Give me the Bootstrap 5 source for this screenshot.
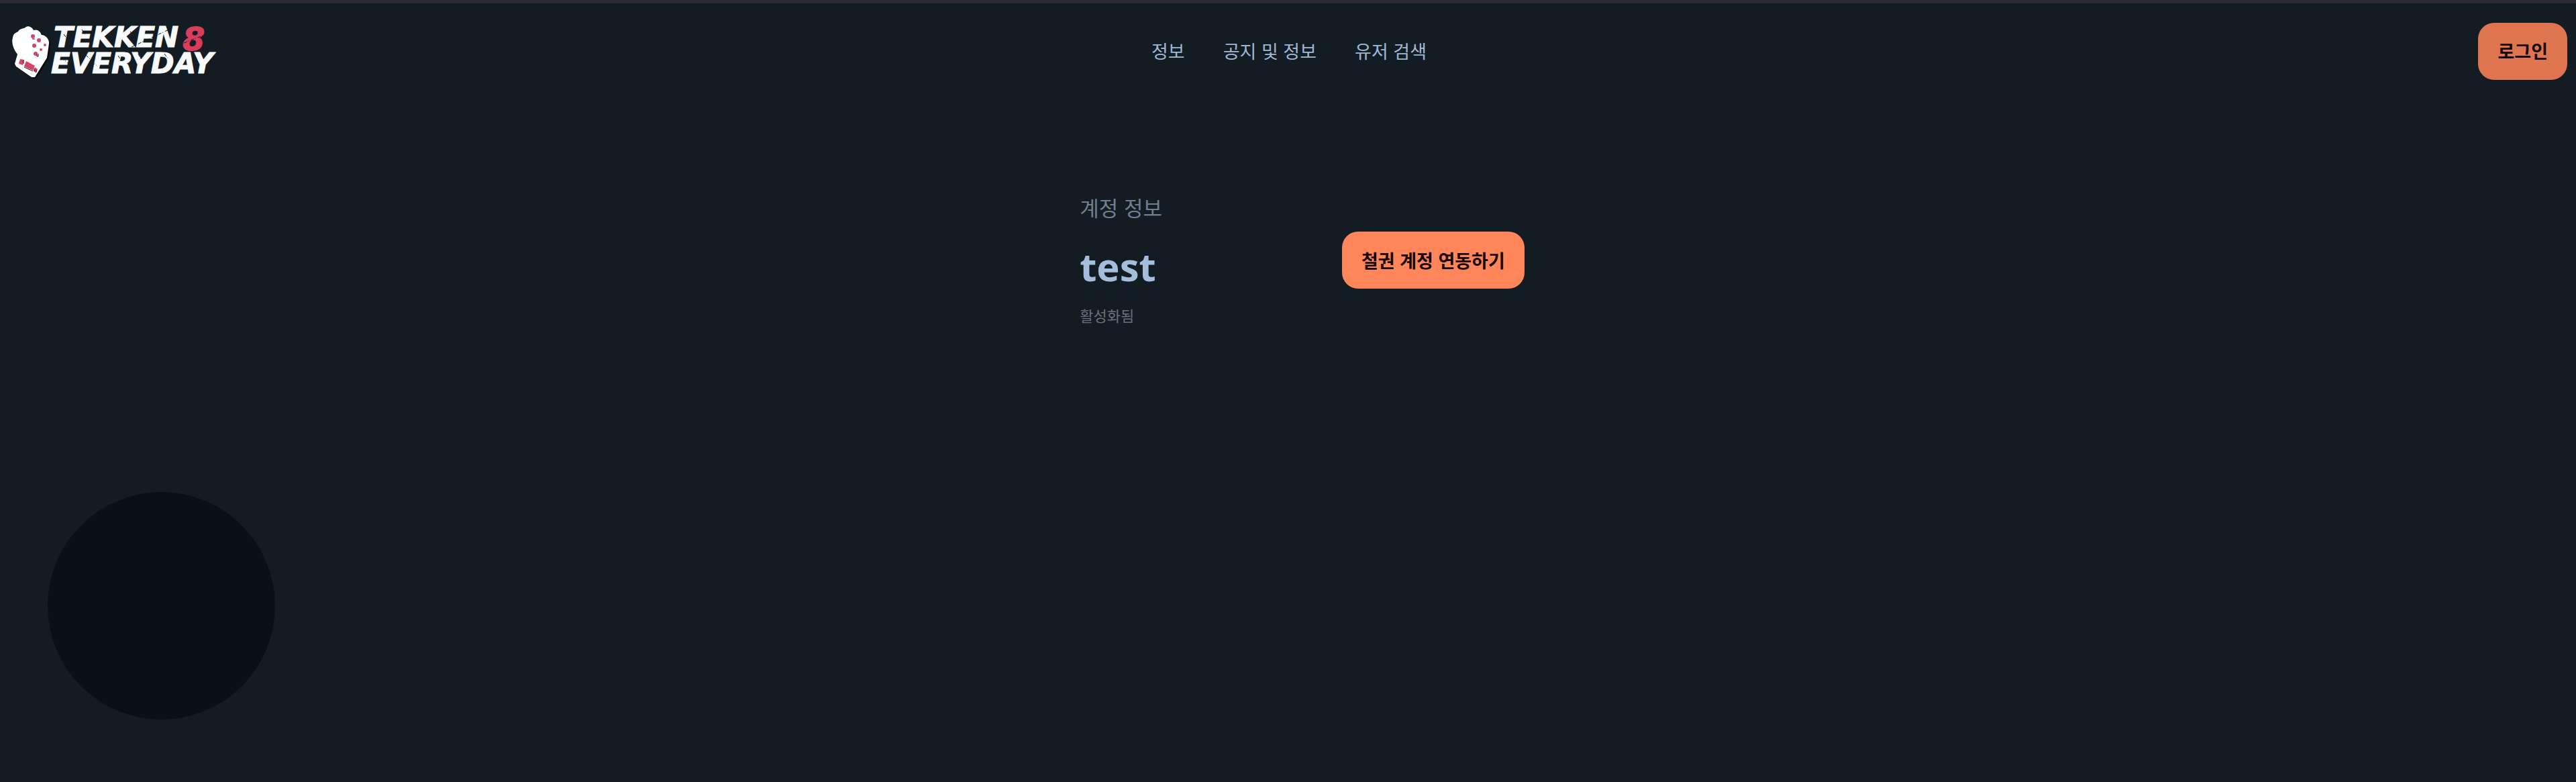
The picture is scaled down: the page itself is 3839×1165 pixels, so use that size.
<!DOCTYPE html>
<html lang="ko">
<head>
<meta charset="utf-8">
<meta name="viewport" content="width=device-width, initial-scale=1">
<title>TEKKEN 8 EVERYDAY</title>
<link href="https://cdn.jsdelivr.net/npm/bootstrap@5.3.0/dist/css/bootstrap.min.css" rel="stylesheet">
<style>
body{background:#131c22;color:#9fb9d0;font-family:"Noto Sans CJK KR",sans-serif;font-size:27px;border-top:5px solid #2b2a35}
.site-bar{padding:19px 13px 0 16px}
.site-side{flex:1 1 0}
.site-logo{display:block;width:340px;height:104px}
.site-logo text{font-family:"DejaVu Sans",sans-serif;font-weight:700;font-style:oblique;fill:#f7f9fb;stroke:#f7f9fb;stroke-width:1}
.site-logo .num{fill:#d93d5c;stroke:#d93d5c}
.site-links{gap:57px}
.site-links a{color:#a0b8d6;line-height:40px}
.btn-sun{--bs-btn-bg:#ff865b;--bs-btn-color:#160603;--bs-btn-border-color:#ff865b;--bs-btn-hover-bg:#df7550;--bs-btn-hover-border-color:#df7550;--bs-btn-hover-color:#160603;font-size:27px;font-weight:700;line-height:36px;height:85px;padding:0 29px;border-radius:24px;border:0}
.btn-login{--bs-btn-bg:#df7550}
.account{margin-top:157px;padding-left:42px;gap:268px}
.account-label{font-size:31px;line-height:48px;color:#6f7f90}
.account-name{font-family:"Open Sans",sans-serif;font-size:58px;line-height:72px;font-weight:700;color:#a3bddb;margin:28px 0 16px}
.account-state{font-size:22px;line-height:40px;color:#66717f}
.account-action{padding-top:60px}
.orb{left:71px;bottom:93px;width:339px;height:339px;background:radial-gradient(circle at 55% 50%,#061217 72%,#0a141a 100%)}
</style>
</head>
<body class="min-vh-100">
<header class="site-bar d-flex align-items-center">
  <div class="site-side d-flex">
    <a href="#" aria-label="TEKKEN 8 EVERYDAY">
      <svg class="site-logo" viewBox="0 3 340 104">
        <path d="M11 26C13 21 20 22 23 19C27 17 32 20 34 24C40 22 44 26 46 31C52 31 58 38 57 44L54 65L36 94L31 94L8 78L6 74L10 60C3 51 1 41 3 35C4 29 7 28 11 26Z" transform="translate(2 2)" fill="#05080b"/>
        <path d="M11 26C13 21 20 22 23 19C27 17 32 20 34 24C40 22 44 26 46 31C52 31 58 38 57 44L54 65L36 94L31 94L8 78L6 74L10 60C3 51 1 41 3 35C4 29 7 28 11 26Z" fill="#fff"/>
        <g fill="#d3456a">
          <circle cx="33" cy="33" r="3"/><circle cx="42" cy="39" r="3"/><circle cx="35" cy="47" r="3"/>
          <circle cx="51" cy="46" r="2"/><circle cx="45" cy="53" r="2"/><circle cx="37" cy="59" r="3"/>
          <path d="M14 67 20 68 18 76 12 74ZM23 70 36 77 33 84 20 78ZM36 79 40 82 38 88 34 85Z"/>
        </g>
        <path d="M32 37h4M39 60v3h2v-4M19 69v5M20 79l13 6M35 81v4M38 83v3" fill="none" stroke="#1b1418"/>
        <text x="64" y="49" font-size="42">TEKKEN</text>
        <text x="60" y="88" font-size="42">EVERYDAY</text>
        <text class="num" x="256" y="54" font-size="48">8</text>
        <path d="M79 30l9 12m18-19 5 7m34 3 8 13m25-20 5 6m-107 33 9 8m27-12 16 16m32-15 6 9m24-12 4 8m35-8 6 8M180 49l60-28M258 43l36-14" fill="none" stroke="#131c22" stroke-width="1" stroke-dasharray="5 2 1 3"/>
      </svg>
    </a>
  </div>
  <nav class="site-links d-flex" aria-label="주 메뉴">
    <a class="text-decoration-none" href="#">정보</a>
    <a class="text-decoration-none" href="#">공지 및 정보</a>
    <a class="text-decoration-none" href="#">유저 검색</a>
  </nav>
  <div class="site-side d-flex justify-content-end">
    <button type="button" class="btn btn-sun btn-login">로그인</button>
  </div>
</header>
<main class="account d-flex justify-content-center">
  <section>
    <div class="account-label">계정 정보</div>
    <h1 class="account-name">test</h1>
    <div class="account-state">활성화됨</div>
  </section>
  <div class="account-action"><button type="button" class="btn btn-sun">철권 계정 연동하기</button></div>
</main>
<div class="orb position-fixed rounded-circle" aria-hidden="true"></div>
<script src="https://cdn.jsdelivr.net/npm/bootstrap@5.3.0/dist/js/bootstrap.bundle.min.js"></script>
</body>
</html>
